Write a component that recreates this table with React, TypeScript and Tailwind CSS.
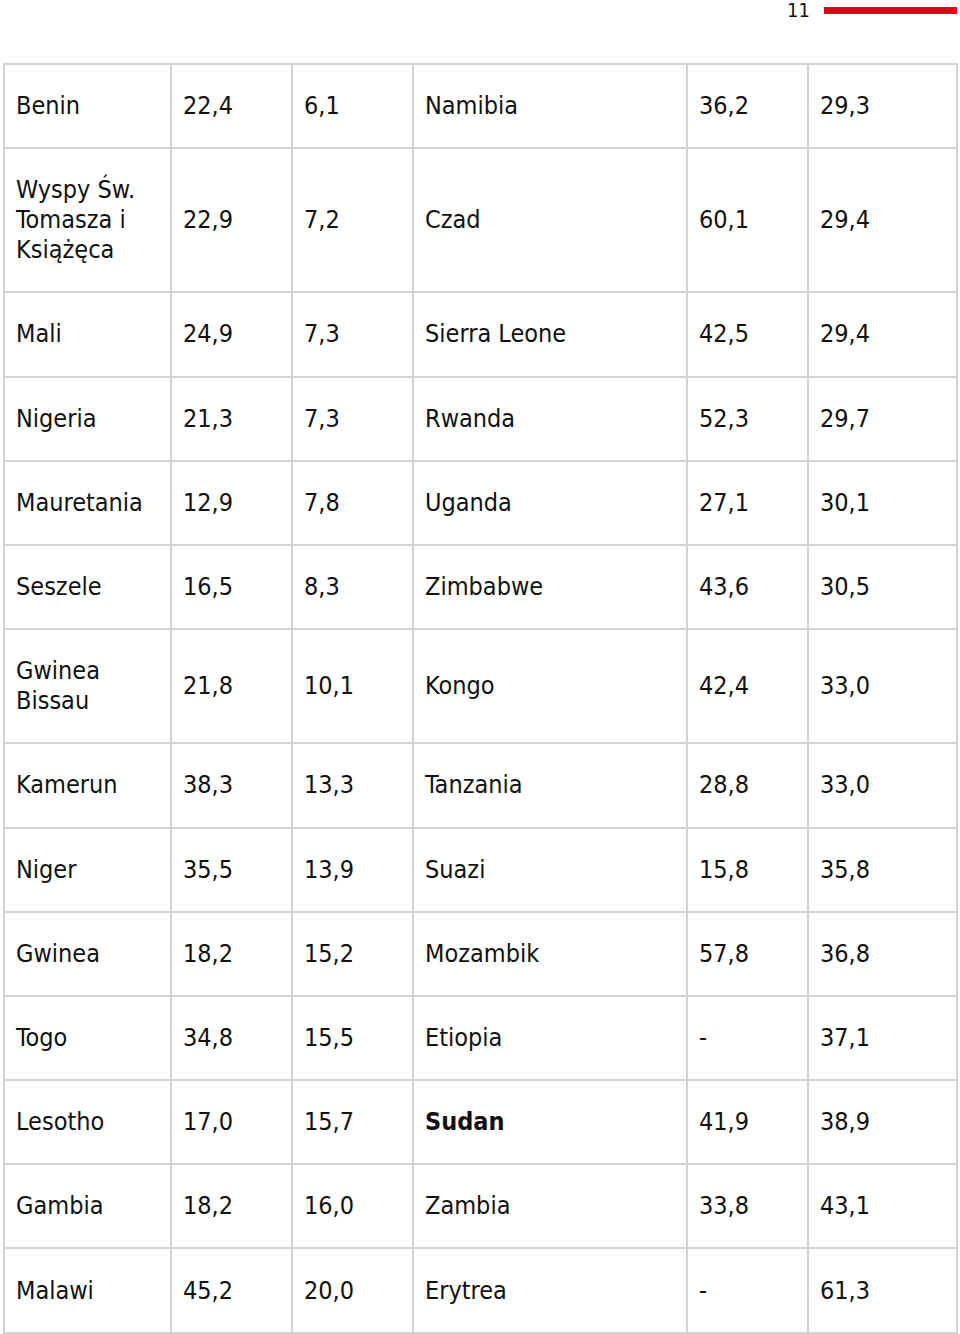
import React from 'react';

type Row = [string, string, string, string, string, string];

const rows: Row[] = [
  ['Benin', '22,4', '6,1', 'Namibia', '36,2', '29,3'],
  ['Wyspy Św. Tomasza i Książęca', '22,9', '7,2', 'Czad', '60,1', '29,4'],
  ['Mali', '24,9', '7,3', 'Sierra Leone', '42,5', '29,4'],
  ['Nigeria', '21,3', '7,3', 'Rwanda', '52,3', '29,7'],
  ['Mauretania', '12,9', '7,8', 'Uganda', '27,1', '30,1'],
  ['Seszele', '16,5', '8,3', 'Zimbabwe', '43,6', '30,5'],
  ['Gwinea Bissau', '21,8', '10,1', 'Kongo', '42,4', '33,0'],
  ['Kamerun', '38,3', '13,3', 'Tanzania', '28,8', '33,0'],
  ['Niger', '35,5', '13,9', 'Suazi', '15,8', '35,8'],
  ['Gwinea', '18,2', '15,2', 'Mozambik', '57,8', '36,8'],
  ['Togo', '34,8', '15,5', 'Etiopia', '-', '37,1'],
  ['Lesotho', '17,0', '15,7', 'Sudan', '41,9', '38,9'],
  ['Gambia', '18,2', '16,0', 'Zambia', '33,8', '43,1'],
  ['Malawi', '45,2', '20,0', 'Erytrea', '-', '61,3'],
];

const colWidths = ['w-[167px]', 'w-[121px]', 'w-[121px]', 'w-[274px]', 'w-[121px]', 'w-[149px]'];

export default function App() {
  return (
    <div className="w-[960px] min-h-[1334px] bg-white text-[#111] font-['DejaVu_Sans_Condensed','DejaVu_Sans',sans-serif] font-stretch-condensed">
      <div className="h-[63px] flex items-start justify-end pr-[3px]">
        <span className="text-[20px] leading-[18px] pt-[1px] mr-[14px]">11</span>
        <div className="w-[133px] h-[7px] mt-[7px] bg-[#e2001a]" />
      </div>

      <table className="ml-[3px] w-[953px] table-fixed border-collapse">
        <colgroup>
          {colWidths.map((w, i) => (
            <col key={i} className={w} />
          ))}
        </colgroup>
        <tbody>
          {rows.map((r) => (
            <tr key={r[0]}>
              {r.map((cell, i) => (
                <td
                  key={i}
                  className={
                    'border-2 border-[#d2d2d2] pl-[11px] pr-[10px] py-[26.1px] align-middle text-[25px] leading-[30px] ' +
                    (cell === 'Sudan' ? 'font-bold' : 'font-normal')
                  }
                >
                  {cell}
                </td>
              ))}
            </tr>
          ))}
        </tbody>
      </table>
    </div>
  );
}
